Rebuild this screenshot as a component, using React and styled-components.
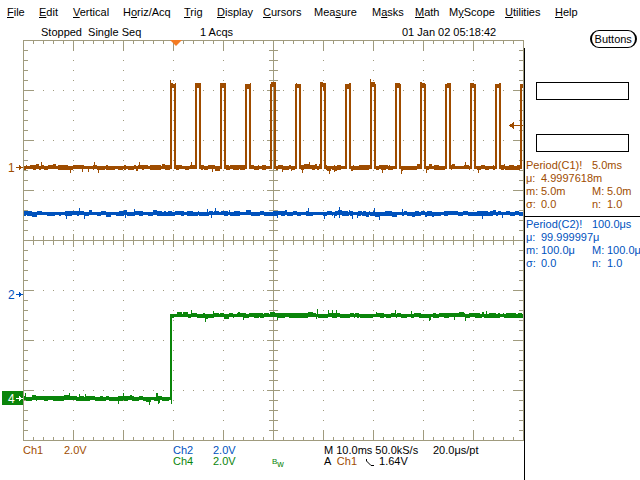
import React from 'react'
import styled, { createGlobalStyle } from 'styled-components'

const BROWN = '#9e4c00'
const BLUE = '#0052bd'
const GREEN = '#0a850a'
const GRID = '#a09b7e'
const TRIG = '#f47b22'

const GlobalStyle = createGlobalStyle`
  body {
    margin: 0;
    background: #fff;
  }
`

const Screen = styled.div`
  width: 640px;
  height: 480px;
  overflow: hidden;
  background: #fff;
  display: flex;
  flex-direction: column;
  font-family: "Liberation Sans", Arial, sans-serif;
  font-size: 11px;
  color: #000;
`
const MenuBar = styled.div`
  display: flex;
  align-items: center;
  height: 24px;
  padding-left: 7px;
`
const MenuItem = styled.div`
  width: ${p => p.$w}px;
  flex: none;
  white-space: nowrap;
  u {
    text-decoration: underline;
    text-underline-offset: 1px;
  }
`
const Body = styled.div`
  display: flex;
  flex: 1;
  min-height: 0;
`
const ScopeColumn = styled.div`
  width: 524px;
  flex: none;
  display: flex;
  flex-direction: column;
`
const StatusLine = styled.div`
  height: 16px;
  display: grid;
  grid-template-columns: 159px 202px auto;
  align-items: center;
  padding-left: 41px;
  white-space: pre;
`
const Display = styled.svg`
  display: block;
  flex: none;
  shape-rendering: crispEdges;
`
const Readout = styled.div`
  display: grid;
  grid-template-columns: 41px 109px 40px 59px 52px 109px auto;
  grid-auto-rows: 11px;
  line-height: 11px;
  padding: 4px 0 0 23px;
  white-space: pre;
`
const Cell = styled.span`
  grid-column: ${p => p.$col};
  color: ${p => p.$tone || '#000'};
`
const Bw = styled.span`
  color: ${GREEN};
  font-size: 9px;
  b {
    font-weight: normal;
    font-size: 8px;
    position: relative;
    top: -1px;
  }
  i {
    font-style: normal;
    position: relative;
    top: 2px;
  }
`
const Slope = styled.svg`
  display: inline-block;
  vertical-align: middle;
  margin: 0 5px 0 9px;
`
const SidePanel = styled.div`
  flex: 1;
  display: flex;
  flex-direction: column;
`
const ButtonsRow = styled.div`
  height: 24px;
  display: flex;
  align-items: flex-end;
  justify-content: flex-end;
  padding-right: 4px;
`
const PillButton = styled.div`
  height: 18px;
  box-sizing: border-box;
  padding: 0 3px;
  border: 1px solid #000;
  border-left-width: 2px;
  border-right-width: 2px;
  border-radius: 9px;
  display: flex;
  align-items: center;
`
const MeasurePanel = styled.div`
  flex: 1;
  border-left: 1px solid #000;
  padding-top: 34px;
  display: flex;
  flex-direction: column;
`
const ReadBox = styled.div`
  width: 93px;
  height: 18px;
  box-sizing: border-box;
  margin: 0 0 ${p => p.$after}px 11px;
  border: 1px solid #000;
`
const MeasureGroup = styled.div`
  display: grid;
  grid-template-columns: 66px auto;
  line-height: 13px;
  padding: ${p => (p.$first ? '0 0 5px 1px' : '1px 0 0 1px')};
  border-top: ${p => (p.$first ? 'none' : '1px solid #000')};
  color: ${p => p.$tone};
  white-space: nowrap;
`
const Wide = styled.span`
  grid-column: 1 / 3;
`
const Lbl = styled.span`
  display: inline-block;
  width: 15px;
`

const menu = [
  ['', 'F', 'ile', 32],
  ['', 'E', 'dit', 34],
  ['', 'V', 'ertical', 50],
  ['H', 'o', 'riz/Acq', 61],
  ['', 'T', 'rig', 33],
  ['', 'D', 'isplay', 46],
  ['', 'C', 'ursors', 51],
  ['Mea', 's', 'ure', 58],
  ['M', 'a', 'sks', 43],
  ['', 'M', 'ath', 34],
  ['M', 'y', 'Scope', 56],
  ['', 'U', 'tilities', 50],
  ['', 'H', 'elp', 40],
]

function makeRand(seed) {
  let s = seed
  return () => {
    s = (Math.imul(s, 1664525) + 1013904223) >>> 0
    return s / 4294967296
  }
}

// noisy trace drawn as one-pixel columns, noise comes in short blocks
function band(rand, x0, x1, levelAt) {
  let d = ''
  let runLeft = 0
  let up = 0
  let down = 0
  for (let x = x0; x < x1; x++) {
    if (runLeft <= 0) {
      runLeft = 1 + Math.floor(rand() * 5)
      const r = rand()
      up = r < 0.3 ? 1 : r < 0.4 ? 2 : 0
      down = r > 0.62 ? 1 : r > 0.55 ? 2 : 0
      if (rand() < 0.25) {
        up = 1
        down = 1
      }
    }
    runLeft--
    const y = levelAt(x)
    let top = y - 1 - up
    let bot = y + 2 + down
    if (rand() < 0.02) bot += 3
    if (rand() < 0.02) top -= 3
    d += `M${x} ${top}h1v${bot - top}h-1z`
  }
  return d
}

const CH1_LOW = 127
const CH1_HIGH = 45
const rises = Array.from({ length: 15 }, (_, k) => 170 + 25 * k)
const ch1Level = x => (rises.some(r => x >= r && x < r + 6) ? CH1_HIGH : CH1_LOW)

let ch1 = band(makeRand(7), 24, 523, ch1Level)
rises.forEach(r => {
  ch1 += `M${r} ${CH1_HIGH - 1}h2V${CH1_LOW + 2}h-2z`
  if (r + 5 < 523) ch1 += `M${r + 4} ${CH1_HIGH - 1}h2V${CH1_LOW + 2}h-2z`
})
const ch2 = band(makeRand(31), 24, 523, () => 173)
let ch4 = band(makeRand(99), 24, 523, x => (x < 172 ? 358 : 275))
ch4 += `M170 274h2V360h-2z`

function graticule() {
  let d = 'M23.5 0.5H523.5V400.5H23.5ZM273.5 0.5V400.5M23.5 200.5H523.5'
  for (let t = 10; t < 500; t += 10) {
    const x = 23.5 + t
    const major = t % 50 === 0
    const len = major ? 10 : 4
    d += `M${x} 0V${len}M${x} 401V${401 - len}`
    d += major ? `M${x} 194V207` : `M${x} 196V205`
  }
  for (let t = 10; t < 400; t += 10) {
    const y = 0.5 + t
    const major = t % 50 === 0
    const len = major ? 10 : 4
    d += `M23 ${y}H${24 + len}M524 ${y}H${523 - len}`
    d += major ? `M267 ${y}H280` : `M269 ${y}H278`
  }
  return d
}

function gridDots() {
  let d = ''
  for (let i = 1; i < 10; i++) {
    if (i === 5) continue
    const x = 23 + 50 * i
    for (let y = 10; y < 400; y += 10) d += `M${x} ${y}h1v1h-1z`
  }
  for (let j = 1; j < 8; j++) {
    if (j === 4) continue
    const y = 50 * j
    for (let x = 33; x < 523; x += 10) d += `M${x} ${y}h1v1h-1z`
  }
  return d
}

const GRAT = graticule()
const DOTS = gridDots()

const ChannelMark = ({ y, label, color, boxed }) => (
  <g>
    {boxed && <rect x="2" y={y - 7} width="21" height="14" fill={color} />}
    <text
      x="8"
      y={y + 5}
      fontSize="12"
      fontFamily="Liberation Sans, Arial, sans-serif"
      fill={boxed ? '#fff' : color}
      style={{ shapeRendering: 'auto' }}
    >
      {label}
    </text>
    <path d={`M16 ${y}.5H20`} stroke={boxed ? '#fff' : color} />
    <path d={`M19 ${y - 2}L23 ${y}.5L19 ${y + 3}Z`} fill={boxed ? '#fff' : color} />
  </g>
)

const ScopeDisplay = () => (
  <Display width="524" height="401" viewBox="0 0 524 401">
    <path d={DOTS} fill={GRID} />
    <path d={GRAT} stroke={GRID} fill="none" />
    <path d={ch2} fill={BLUE} />
    <path d={ch4} fill={GREEN} />
    <path d={ch1} fill={BROWN} />
    <path d="M170 0H182L176 6Z" fill={TRIG} style={{ shapeRendering: 'auto' }} />
    <path d="M513 85.5H523" stroke={BROWN} />
    <path d="M509 85.5L514 82V89Z" fill={BROWN} />
    <ChannelMark y={127} label="1" color={BROWN} />
    <ChannelMark y={254} label="2" color={BLUE} />
    <ChannelMark y={358} label="4" color={GREEN} boxed />
  </Display>
)

const App = () => (
  <Screen>
    <GlobalStyle />
    <MenuBar>
      {menu.map(([pre, key, rest, w]) => (
        <MenuItem key={pre + key + rest} $w={w}>
          {pre}
          <u>{key}</u>
          {rest}
        </MenuItem>
      ))}
    </MenuBar>
    <Body>
      <ScopeColumn>
        <StatusLine>
          <span>Stopped  Single Seq</span>
          <span>1 Acqs</span>
          <span>01 Jan 02 05:18:42</span>
        </StatusLine>
        <ScopeDisplay />
        <Readout>
          <Cell $col={1} $tone={BROWN}>Ch1</Cell>
          <Cell $col={2} $tone={BROWN}>2.0V</Cell>
          <Cell $col={3} $tone={BLUE}>Ch2</Cell>
          <Cell $col={4} $tone={BLUE}>2.0V</Cell>
          <Cell $col={6}>M 10.0ms 50.0kS/s</Cell>
          <Cell $col={7}>20.0μs/pt</Cell>
          <Cell $col={3} $tone={GREEN}>Ch4</Cell>
          <Cell $col={4} $tone={GREEN}>2.0V</Cell>
          <Cell $col={5}>
            <Bw>
              <b>B</b>
              <i>w</i>
            </Bw>
          </Cell>
          <Cell $col={6}>
            A  <span style={{ color: BROWN }}>Ch1</span>
            <Slope width="8" height="9" viewBox="0 0 8 9">
              <path d="M0.5 1V3L5 7.5H8" stroke="#000" fill="none" />
            </Slope>
            1.64V
          </Cell>
        </Readout>
      </ScopeColumn>
      <SidePanel>
        <ButtonsRow>
          <PillButton>Buttons</PillButton>
        </ButtonsRow>
        <MeasurePanel>
          <ReadBox $after={34} />
          <ReadBox $after={7} />
          <MeasureGroup $tone={BROWN} $first>
            <span>Period(C1)!</span>
            <span>5.0ms</span>
            <Wide>
              <Lbl>μ:</Lbl>4.9997618m
            </Wide>
            <span>
              <Lbl>m:</Lbl>5.0m
            </span>
            <span>
              <Lbl>M:</Lbl>5.0m
            </span>
            <span>
              <Lbl>σ:</Lbl>0.0
            </span>
            <span>
              <Lbl>n:</Lbl>1.0
            </span>
          </MeasureGroup>
          <MeasureGroup $tone={BLUE}>
            <span>Period(C2)!</span>
            <span>100.0μs</span>
            <Wide>
              <Lbl>μ:</Lbl>99.999997μ
            </Wide>
            <span>
              <Lbl>m:</Lbl>100.0μ
            </span>
            <span>
              <Lbl>M:</Lbl>100.0μ
            </span>
            <span>
              <Lbl>σ:</Lbl>0.0
            </span>
            <span>
              <Lbl>n:</Lbl>1.0
            </span>
          </MeasureGroup>
        </MeasurePanel>
      </SidePanel>
    </Body>
  </Screen>
)

export default App
